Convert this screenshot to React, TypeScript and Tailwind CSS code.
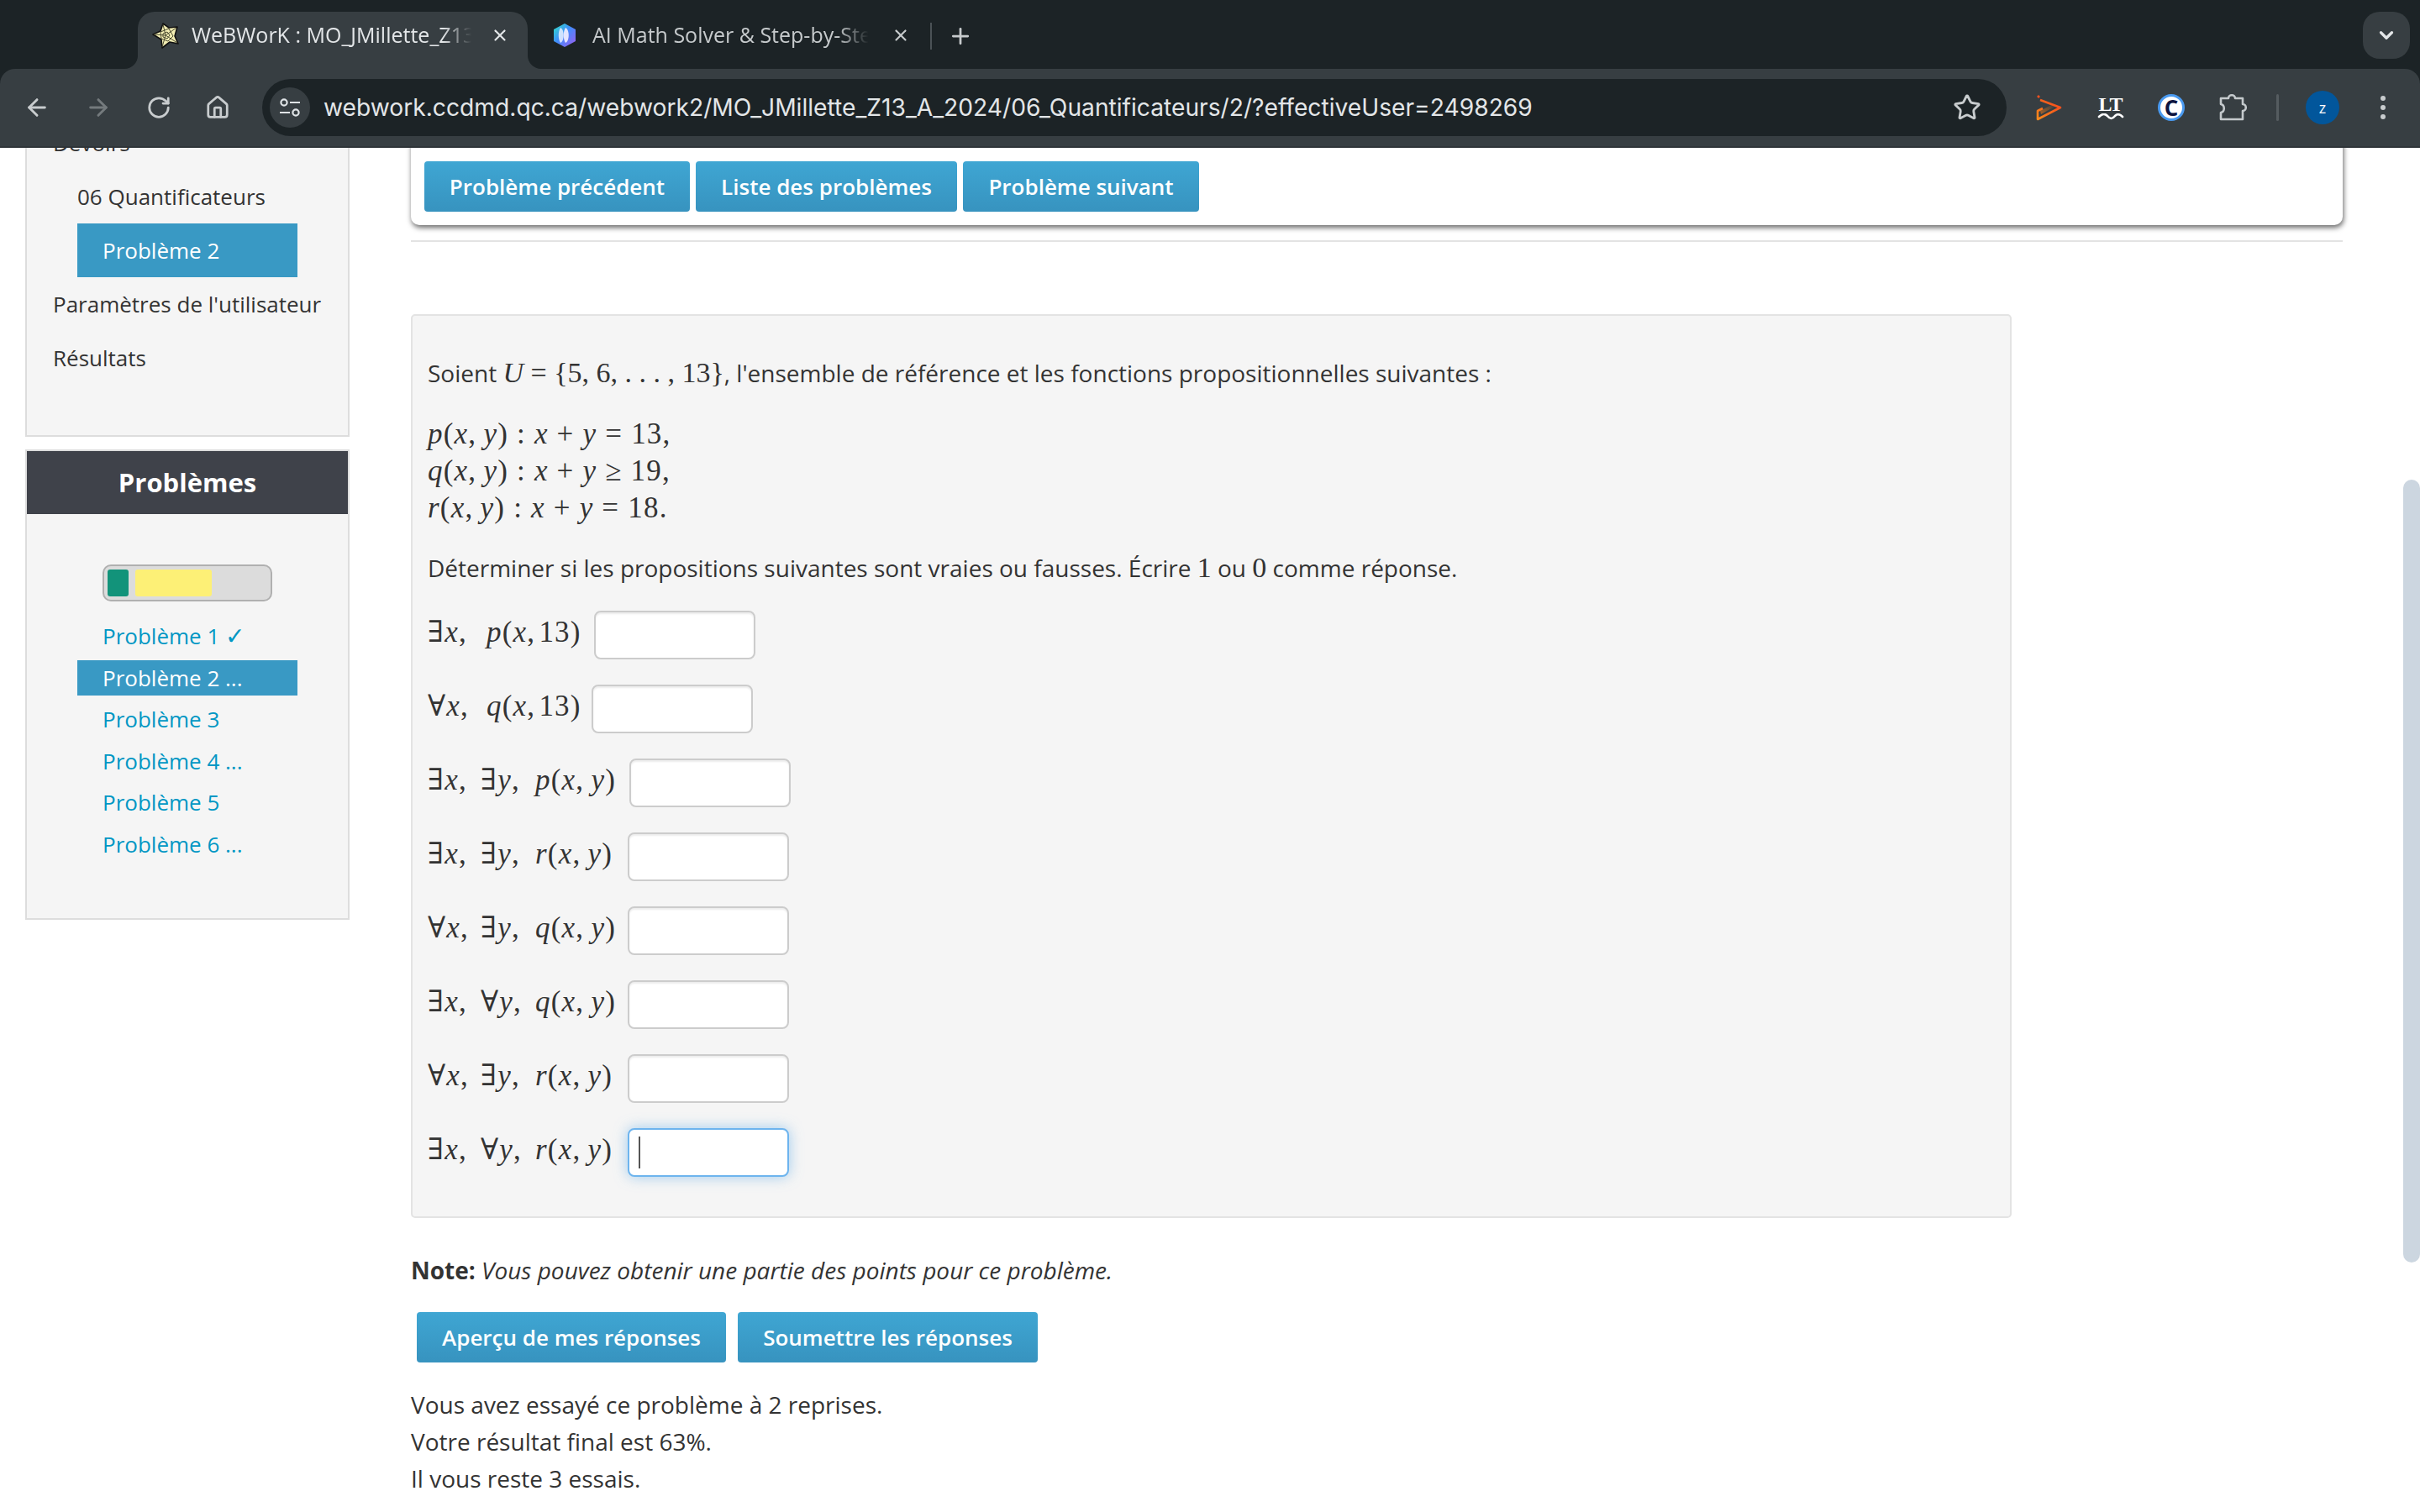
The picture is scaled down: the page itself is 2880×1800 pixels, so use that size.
import { ArrowLeft, ArrowRight, RotateCw, Home, Star, X, Plus, ChevronDown } from 'lucide-react';

const BTN = 'h-[60px] rounded-[4px] bg-gradient-to-b from-[#3fa6d3] to-[#3793bf] text-center text-[26px] font-semibold text-white';
const PROBLEMS = ['Problème 1', 'Problème 2 ...', 'Problème 3', 'Problème 4 ...', 'Problème 5', 'Problème 6 ...'];

const ROWS = [
  { q1: '∃', q2: '', v: 'p', arg: '13', w: 198, focus: false },
  { q1: '∀', q2: '', v: 'q', arg: '13', w: 195, focus: false },
  { q1: '∃', q2: '∃', v: 'p', arg: 'y', w: 240, focus: false },
  { q1: '∃', q2: '∃', v: 'r', arg: 'y', w: 238, focus: false },
  { q1: '∀', q2: '∃', v: 'q', arg: 'y', w: 238, focus: false },
  { q1: '∃', q2: '∀', v: 'q', arg: 'y', w: 238, focus: false },
  { q1: '∀', q2: '∃', v: 'r', arg: 'y', w: 238, focus: false },
  { q1: '∃', q2: '∀', v: 'r', arg: 'y', w: 238, focus: true },
];

function I({ children }: { children: React.ReactNode }) {
  return <span className="italic">{children}</span>;
}

function Pred({ v, arg }: { v: string; arg: string }) {
  return (
    <span>
      <I>{v}</I>(<I>x</I>,{arg === 'y' ? <>&#8201;<I>y</I></> : <>&#8202;{arg}</>})
    </span>
  );
}

function Line({ v, op, n }: { v: string; op: string; n: string }) {
  return (
    <div className="h-[44px] font-['Liberation_Serif',serif] text-[35px] leading-[44px] tracking-[1.2px] text-[#333]">
      <Pred v={v} arg="y" /> : <I>x</I> + <I>y</I> {op} {n}
    </div>
  );
}

function Row({ q1, q2, v, arg, w, focus }: (typeof ROWS)[number]) {
  return (
    <div className="flex h-[58px] items-center">
      <div className="flex pb-[5px] font-['Liberation_Serif','DejaVu_Serif',serif] text-[35px] tracking-[1.2px] text-[#333]" style={{ width: w }}>
        <span className={q2 ? 'w-[63px]' : 'w-[70px]'}>{q1}<I>x</I>,</span>
        {q2 && <span className="w-[65px]">{q2}<I>y</I>,</span>}
        <Pred v={v} arg={arg} />
      </div>
      {focus ? (
        <div className="relative h-[58px] w-[192px]">
          <input readOnly className="h-full w-full rounded-[8px] border-2 border-[#6db4ee] bg-white shadow-[0_0_16px_rgba(102,175,233,0.6)] outline-none" />
          <div className="absolute left-[13px] top-[10px] h-[38px] w-[2px] bg-[#555]" />
        </div>
      ) : (
        <input readOnly className="h-[58px] w-[192px] rounded-[8px] border-2 border-[#ccc] bg-white shadow-[inset_0_2px_2px_rgba(0,0,0,0.075)] outline-none" />
      )}
    </div>
  );
}

function WebworkIcon() {
  return (
    <svg width="34" height="34" viewBox="0 0 34 34">
      <path d="M14 3 L21 8 L31 7 L28 18 L32 27 L22 25 L13 32 L12 22 L2 16 L11 12 Z" fill="#f3eeb4" stroke="#111" strokeWidth="1.6" strokeLinejoin="round" />
      <path d="M17 17 L14 4 M17 17 L30 8 M17 17 L31 26 M17 17 L13 31 M17 17 L3 16 M11 13 L21 9 L26 18 L20 24 L12 21 Z M14 15 L19 13 L22 17 L19 21 L14 19 Z" fill="none" stroke="#4a4a30" strokeWidth="1" />
    </svg>
  );
}

function GemIcon() {
  return (
    <svg width="28" height="30" viewBox="0 0 28 30">
      <defs>
        <linearGradient id="gem" x1="0" y1="0" x2="1" y2="1">
          <stop offset="0" stopColor="#2fe6c4" />
          <stop offset="0.45" stopColor="#3f8dfb" />
          <stop offset="1" stopColor="#a05cf0" />
        </linearGradient>
      </defs>
      <path d="M14 1 L27 8 V22 L14 29 L1 22 V8 Z" fill="url(#gem)" />
      <path d="M9 6 C14 8 14 22 9 24 C6 20 6 10 9 6 Z" fill="#e8f0ff" opacity="0.85" />
      <path d="M15 6 C20 8 20 22 15 24 C12 20 12 10 15 6 Z" fill="#f4efff" opacity="0.9" />
    </svg>
  );
}

function TuneIcon() {
  return (
    <svg width="28" height="28" viewBox="0 0 28 28" fill="none" stroke="#dfe3e6" strokeWidth="2.2">
      <circle cx="7" cy="8" r="3.6" />
      <path d="M14 8 H26 M2 20 H14" />
      <circle cx="21" cy="20" r="3.6" />
    </svg>
  );
}

function OrangeIcon() {
  return (
    <svg width="32" height="33" viewBox="0 0 32 33" fill="none">
      <defs>
        <linearGradient id="org" x1="0" y1="1" x2="1" y2="0">
          <stop offset="0" stopColor="#f98a1c" />
          <stop offset="1" stopColor="#f4431c" />
        </linearGradient>
        <linearGradient id="fade" x1="0" y1="1" x2="1" y2="0">
          <stop offset="0" stopColor="#a8642a" />
          <stop offset="1" stopColor="#a8642a" stopOpacity="0" />
        </linearGradient>
      </defs>
      <path d="M2 2 L4 4" stroke="#f4511e" strokeWidth="2.6" />
      <path d="M5 20 L20 12 L22 15 L6 24 Z" fill="url(#fade)" />
      <path d="M5 7 L29 16 L2 30 V20 L8 17" stroke="url(#org)" strokeWidth="2.6" strokeLinejoin="round" />
    </svg>
  );
}

function LtIcon() {
  return (
    <div className="flex flex-col items-center">
      <span className="h-[22px] font-['Liberation_Serif',serif] text-[24px] font-bold leading-[22px] tracking-[-1px] text-white">LT</span>
      <svg width="32" height="8" viewBox="0 0 32 8" fill="none" stroke="#fff" strokeWidth="2.6" strokeLinecap="round">
        <path d="M2 4 C6 0 9 0 12 3 C15 7 18 7 21 3 C24 0 27 1 30 4" />
      </svg>
    </div>
  );
}

function PuzzleIcon() {
  return (
    <svg width="34" height="34" viewBox="0 0 34 34" fill="none" stroke="#c4c9cc" strokeWidth="2.6" strokeLinejoin="round">
      <path d="M3 6 H12 C12 1 20 1 20 6 H29 V13 C34 13 34 21 29 21 V31 H3 V23 C8 22 8 14 3 13 Z" />
    </svg>
  );
}

function Chrome() {
  return (
    <div className="relative z-10 w-full shrink-0 bg-[#1c2326]">
      <div className="flex h-[82px] items-end pl-[164px] pr-[12px]">
        <div className="relative flex h-[68px] w-[464px] items-center rounded-t-[20px] bg-[#373e42] pb-[12px] pl-[16px]">
          <span className="absolute bottom-0 left-[-16px] h-[16px] w-[16px] bg-[#373e42]"><span className="block h-full w-full rounded-br-[16px] bg-[#1c2326]" /></span>
          <span className="absolute bottom-0 right-[-16px] h-[16px] w-[16px] bg-[#373e42]"><span className="block h-full w-full rounded-bl-[16px] bg-[#1c2326]" /></span>
          <WebworkIcon />
          <span className="ml-[14px] w-[340px] whitespace-nowrap text-[25px] text-[#e3e6e8] [mask-image:linear-gradient(to_right,black_88%,transparent_98%)]">WeBWorK : MO_JMillette_Z13</span>
          <X className="absolute right-[22px] top-[17px] text-[#e3e6e8]" size={22} strokeWidth={2.4} />
        </div>
        <div className="relative flex h-[68px] w-[479px] items-center pb-[12px] pl-[30px]">
          <GemIcon />
          <span className="ml-[19px] w-[332px] whitespace-nowrap text-[25px] text-[#c6cacc] [mask-image:linear-gradient(to_right,black_88%,transparent_99%)]">AI Math Solver &amp; Step-by-Ste</span>
          <X className="absolute right-[24px] top-[17px] text-[#c6cacc]" size={22} strokeWidth={2.4} />
        </div>
        <div className="mb-[23px] h-[32px] w-[2px] bg-[#4b5256]" />
        <Plus className="mb-[24px] ml-[19px] text-[#c6cacc]" size={30} strokeWidth={2.2} />
        <div className="mb-[12px] ml-auto flex h-[56px] w-[56px] items-center justify-center rounded-[20px] bg-[#373e42]">
          <ChevronDown className="text-[#e3e6e8]" size={26} strokeWidth={3} />
        </div>
      </div>
      <div className="flex h-[94px] items-center rounded-t-[18px] border-b-2 border-[#2e3438] bg-[#373e42] pl-[7px]">
        <div className="flex w-[73px] justify-center"><ArrowLeft className="text-[#c8ccce]" size={32} strokeWidth={2.2} /></div>
        <div className="flex w-[73px] justify-center"><ArrowRight className="text-[#747a7d]" size={32} strokeWidth={2.2} /></div>
        <div className="flex w-[71px] justify-center"><RotateCw className="text-[#c8ccce]" size={30} strokeWidth={2.2} /></div>
        <div className="flex w-[70px] justify-center"><Home className="text-[#c8ccce]" size={30} strokeWidth={2.2} /></div>
        <div className="ml-[18px] flex h-[68px] w-[2076px] items-center rounded-full bg-[#1c2326] pl-[9px] pr-[30px]">
          <div className="flex h-[48px] w-[48px] items-center justify-center rounded-full bg-[#373e42]"><TuneIcon /></div>
          <span className="ml-[16px] font-['Inter',sans-serif] text-[28.2px] text-[#e3e6e8]">webwork.ccdmd.qc.ca/webwork2/MO_JMillette_Z13_A_2024/06_Quantificateurs/2/?effectiveUser=2498269</span>
          <Star className="ml-auto text-[#c8ccce]" size={34} strokeWidth={2} />
        </div>
        <div className="ml-[15px] flex w-[72px] justify-center"><OrangeIcon /></div>
        <div className="flex w-[73px] justify-center"><LtIcon /></div>
        <div className="flex w-[72px] justify-center">
          <div className="flex h-[32px] w-[32px] items-center justify-center rounded-full border-[3px] border-[#4a9af0] bg-white text-[26px] font-bold leading-none text-[#0d1440]">C</div>
        </div>
        <div className="flex w-[73px] justify-center"><PuzzleIcon /></div>
        <div className="ml-[16px] h-[32px] w-[3px] rounded bg-[#555c60]" />
        <div className="ml-[32px] flex h-[40px] w-[40px] items-center justify-center rounded-full bg-[#02569b] text-[18px] font-medium text-white">z</div>
        <div className="ml-[49px] flex flex-col gap-[5px]">
          <span className="h-[6px] w-[6px] rounded-full bg-[#c8ccce]" />
          <span className="h-[6px] w-[6px] rounded-full bg-[#c8ccce]" />
          <span className="h-[6px] w-[6px] rounded-full bg-[#c8ccce]" />
        </div>
      </div>
    </div>
  );
}

function Sidebar() {
  return (
    <div className="ml-[30px] mt-[-76px] w-[386px] shrink-0 text-[26px]">
      <div className="h-[420px] border-2 border-[#ddd] bg-[#f5f5f5] pt-[36px] leading-[64px]">
        <div className="h-[64px] pl-[31px]">Devoirs</div>
        <div className="h-[64px] pl-[60px]">06 Quantificateurs</div>
        <div className="ml-[60px] h-[64px] w-[262px] bg-[#3999c4] pl-[30px] text-white">Problème 2</div>
        <div className="h-[64px] pl-[31px]">Paramètres de l&apos;utilisateur</div>
        <div className="h-[64px] pl-[31px]">Résultats</div>
      </div>
      <div className="mt-[15px] h-[560px] border-2 border-[#ddd] bg-[#f5f5f5]">
        <div className="flex h-[75px] items-center justify-center bg-[#3f424a] text-[31px] font-bold text-white">Problèmes</div>
        <div className="ml-[90px] mt-[60px] flex h-[44px] w-[202px] gap-[8px] rounded-[10px] border-2 border-[#b0b0b0] bg-[#dcdcdc] p-[4px]">
          <div className="w-[25px] rounded-[3px] bg-[#12937a]" />
          <div className="w-[91px] rounded-[3px] bg-[#fdf076]" />
        </div>
        <div className="mt-[20px]">
          {PROBLEMS.map((p, i) => (
            <div key={p} className={`ml-[60px] mb-[7.6px] h-[42px] w-[262px] pl-[30px] leading-[42px] ${i === 1 ? 'bg-[#3999c4] text-white' : 'text-[#0097c4]'}`}>
              {p}{i === 0 && <> <span className="font-['DejaVu_Sans',sans-serif] text-[28px] font-bold leading-none">✓</span></>}
            </div>
          ))}
        </div>
      </div>
    </div>
  );
}

export default function App() {
  return (
    <div className="relative flex h-[1800px] w-[2880px] flex-col overflow-hidden bg-white font-['Open_Sans',sans-serif] text-[28px] text-[#333]">
      <Chrome />
      <div className="flex min-h-0 flex-1">
        <Sidebar />
        <div className="ml-[73px] w-[2299px]">
          <div className="-mt-[40px] flex h-[132px] items-end gap-[7px] rounded-b-[10px] bg-white pb-[16px] pl-[16px] shadow-[1px_3px_6px_rgba(0,0,0,0.6)]">
            <button className={`${BTN} w-[316px]`}>Problème précédent</button>
            <button className={`${BTN} w-[311px]`}>Liste des problèmes</button>
            <button className={`${BTN} w-[281px]`}>Problème suivant</button>
          </div>
          <div className="mt-[18px] h-[2px] bg-[#e3e3e3]" />
          <div className="mt-[86px] h-[1076px] w-[1905px] rounded-[5px] border-2 border-[#e3e3e3] bg-[#f5f5f5] px-[18px] pt-[46px]">
            <div className="h-[44px] leading-[44px]">
              Soient <span className="font-['Liberation_Serif',serif] text-[34px]"><I>U</I> = {'{'}5, 6, . . . , 13{'}'}</span>, l&apos;ensemble de référence et les fonctions propositionnelles suivantes :
            </div>
            <div className="mt-[29px]">
              <Line v="p" op="=" n="13," />
              <Line v="q" op="≥" n="19," />
              <Line v="r" op="=" n="18." />
            </div>
            <div className="mt-[27px] h-[44px] leading-[44px]">
              Déterminer si les propositions suivantes sont vraies ou fausses. Écrire <span className="font-['Liberation_Serif',serif] text-[34px]">1</span> ou <span className="font-['Liberation_Serif',serif] text-[34px]">0</span> comme réponse.
            </div>
            <div className="mt-[29px] flex flex-col gap-[30px]">
              {ROWS.map((r, i) => <Row key={i} {...r} />)}
            </div>
          </div>
          <div className="mt-[40px] h-[44px] leading-[44px]"><b>Note:</b> <i>Vous pouvez obtenir une partie des points pour ce problème.</i></div>
          <div className="ml-[7px] mt-[28px] flex gap-[14px]">
            <button className={`${BTN} w-[368px]`}>Aperçu de mes réponses</button>
            <button className={`${BTN} w-[357px]`}>Soumettre les réponses</button>
          </div>
          <div className="mt-[28px] leading-[44px]">
            <div>Vous avez essayé ce problème à 2 reprises.</div>
            <div>Votre résultat final est 63%.</div>
            <div>Il vous reste 3 essais.</div>
          </div>
        </div>
      </div>
      <div className="absolute right-0 top-[571px] h-[932px] w-[20px] rounded-t-full rounded-b-full bg-[#ccd6e0]" />
    </div>
  );
}
